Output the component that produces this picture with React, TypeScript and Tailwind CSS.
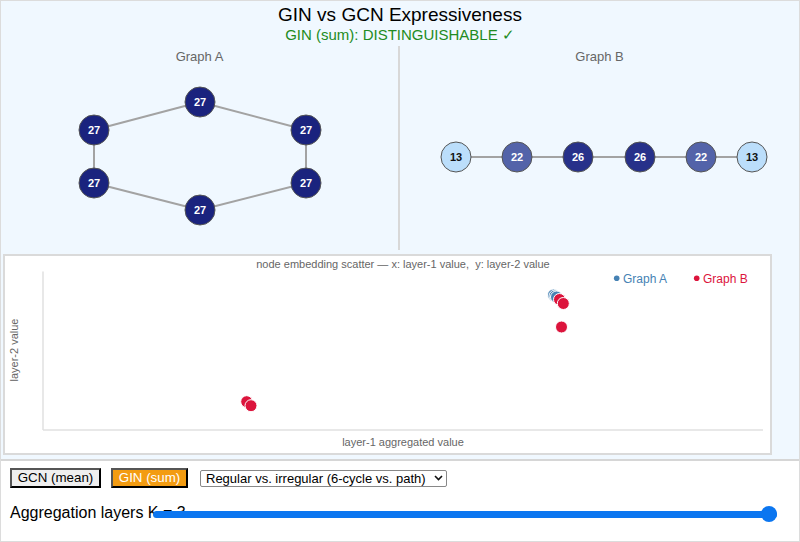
import React from 'react'

const NODE_COLORS: Record<number, { fill: string; text: string }> = {
  13: { fill: '#bbdefb', text: '#111' },
  22: { fill: '#5363a9', text: '#fff' },
  26: { fill: '#27318a', text: '#fff' },
  27: { fill: '#1a237e', text: '#fff' },
}

const GRAPH_A = {
  nodes: [
    { x: 199, y: 34, v: 27 },
    { x: 305, y: 62, v: 27 },
    { x: 305, y: 115, v: 27 },
    { x: 199, y: 142, v: 27 },
    { x: 93, y: 115, v: 27 },
    { x: 93, y: 62, v: 27 },
  ],
  edges: [
    [0, 1],
    [1, 2],
    [2, 3],
    [3, 4],
    [4, 5],
    [5, 0],
  ],
}

const GRAPH_B = {
  nodes: [
    { x: 56, y: 89, v: 13 },
    { x: 117, y: 89, v: 22 },
    { x: 178, y: 89, v: 26 },
    { x: 240, y: 89, v: 26 },
    { x: 301, y: 89, v: 22 },
    { x: 352, y: 89, v: 13 },
  ],
  edges: [
    [0, 1],
    [1, 2],
    [2, 3],
    [3, 4],
    [4, 5],
  ],
}

// scatter points, coords relative to the panel's inner box
const POINTS_A = [
  { x: 548.5, y: 39 },
  { x: 550, y: 40 },
  { x: 551.5, y: 41 },
]
const POINTS_B = [
  { x: 241.7, y: 145.7 },
  { x: 246, y: 149.7 },
  { x: 554.5, y: 43.5 },
  { x: 558.3, y: 47.5 },
  { x: 556.5, y: 71 },
]

type Graph = typeof GRAPH_A

function GraphView({ graph }: { graph: Graph }) {
  return (
    <svg width={399} height={182} className="block">
      {graph.edges.map(([a, b], i) => (
        <line
          key={i}
          x1={graph.nodes[a].x}
          y1={graph.nodes[a].y}
          x2={graph.nodes[b].x}
          y2={graph.nodes[b].y}
          stroke="#a3a3a3"
          strokeWidth={2}
        />
      ))}
      {graph.nodes.map((n, i) => {
        const c = NODE_COLORS[n.v]
        return (
          <g key={i}>
            <circle cx={n.x} cy={n.y} r={15} fill={c.fill} stroke="#555" strokeWidth={1} />
            <text
              x={n.x}
              y={n.y + 4}
              textAnchor="middle"
              fontSize={11}
              fontWeight={600}
              fill={c.text}
              fontFamily="'Liberation Sans', Arial, sans-serif"
            >
              {n.v}
            </text>
          </g>
        )
      })}
    </svg>
  )
}

function Scatter() {
  return (
    <svg width={765} height={197} className="block" fontFamily="'Liberation Sans', Arial, sans-serif">
      <text x={398} y={11.5} textAnchor="middle" fontSize={11} fill="#666" xmlSpace="preserve">
        {'node embedding scatter — x: layer-1 value,\u00a0 y: layer-2 value'}
      </text>
      <line x1={38} y1={15.5} x2={38} y2={174} stroke="#e0e0e0" strokeWidth={1.5} />
      <line x1={38} y1={174} x2={758} y2={174} stroke="#e0e0e0" strokeWidth={1.5} />
      <text x={398} y={189.5} textAnchor="middle" fontSize={11} fill="#666">
        layer-1 aggregated value
      </text>
      <text
        x={12.5}
        y={94}
        textAnchor="middle"
        fontSize={11}
        fill="#666"
        transform="rotate(-90 12.5 94)"
      >
        layer-2 value
      </text>

      <circle cx={611.7} cy={22.3} r={2.8} fill="#4682b4" />
      <text x={618} y={26.5} fontSize={12} fill="#4682b4">
        Graph A
      </text>
      <circle cx={691.7} cy={22.3} r={2.8} fill="#dc143c" />
      <text x={698} y={26.5} fontSize={12} fill="#dc143c">
        Graph B
      </text>

      {POINTS_A.map((p, i) => (
        <circle key={`a${i}`} cx={p.x} cy={p.y} r={6} fill="#4682b4" stroke="#fff" strokeWidth={1} />
      ))}
      {POINTS_B.map((p, i) => (
        <circle key={`b${i}`} cx={p.x} cy={p.y} r={6} fill="#dc143c" stroke="#fff" strokeWidth={1} />
      ))}
    </svg>
  )
}

export default function App() {
  return (
    <div
      className="w-[800px] h-[542px] border border-[#dcdcdc] flex flex-col overflow-hidden bg-white text-black"
      style={{ fontFamily: "'Liberation Sans', Arial, sans-serif" }}
    >
      {/* top: graphs + scatter */}
      <div className="h-[460px] shrink-0 bg-[#f0f8ff] border-b-2 border-[#d6d6d6] flex flex-col">
        <div className="h-[45px] pt-[3px] text-center">
          <div className="text-[19px] leading-[22px]">GIN vs GCN Expressiveness</div>
          <div className="text-[15px] leading-[18px] text-[#228b22]">GIN (sum): DISTINGUISHABLE ✓</div>
        </div>

        <div className="flex h-[204px]">
          <div className="w-[399px] border-r-2 border-[#d8d8d8] flex flex-col">
            <div className="h-[22px] leading-[22px] text-center text-[13px] text-[#666]">Graph A</div>
            <GraphView graph={GRAPH_A} />
          </div>
          <div className="flex-1 flex flex-col">
            <div className="h-[22px] leading-[22px] text-center text-[13px] text-[#666]">Graph B</div>
            <GraphView graph={GRAPH_B} />
          </div>
        </div>

        <div className="mt-[4px] ml-[2px] w-[769px] h-[201px] bg-white border-2 border-[#dadada]">
          <Scatter />
        </div>
      </div>

      {/* controls */}
      <div className="flex-1 px-[9px] pt-[6px]">
        <div className="flex items-center h-[22px]">
          <button className="h-[20px] w-[91px] text-[13.33px] leading-none bg-[#efefef] border-2 border-t-[#555] border-l-[#555] border-r-black border-b-black">
            GCN (mean)
          </button>
          <button className="ml-[10px] h-[20px] w-[77px] text-[13.33px] leading-none text-white bg-[#f39c12] border-2 border-t-[#555] border-l-[#555] border-r-black border-b-black">
            GIN (sum)
          </button>
          <div className="ml-[12px] h-[17px] w-[247px] flex items-center justify-between pl-[5px] pr-[3px] bg-white border border-[#888] rounded-[2px] text-[13px] leading-none">
            <span>Regular vs. irregular (6-cycle vs. path)</span>
            <svg width="9" height="6" viewBox="0 0 9 6">
              <path d="M1 1l3.5 3.5L8 1" fill="none" stroke="#111" strokeWidth="1.6" />
            </svg>
          </div>
        </div>

        <div className="flex items-center mt-[13px] h-[24px]">
          <div className="w-[143px] shrink-0 whitespace-nowrap text-[16px] leading-[20px] -mt-[3px] overflow-visible">
            Aggregation layers K = 3
          </div>
          <div className="relative w-[624px] h-[16px] flex items-center">
            <div className="w-full h-[7px] rounded-full bg-[#0b76f0]" />
            <div className="absolute right-0 w-[16px] h-[16px] rounded-full bg-[#0b76f0]" />
          </div>
        </div>
      </div>
    </div>
  )
}
